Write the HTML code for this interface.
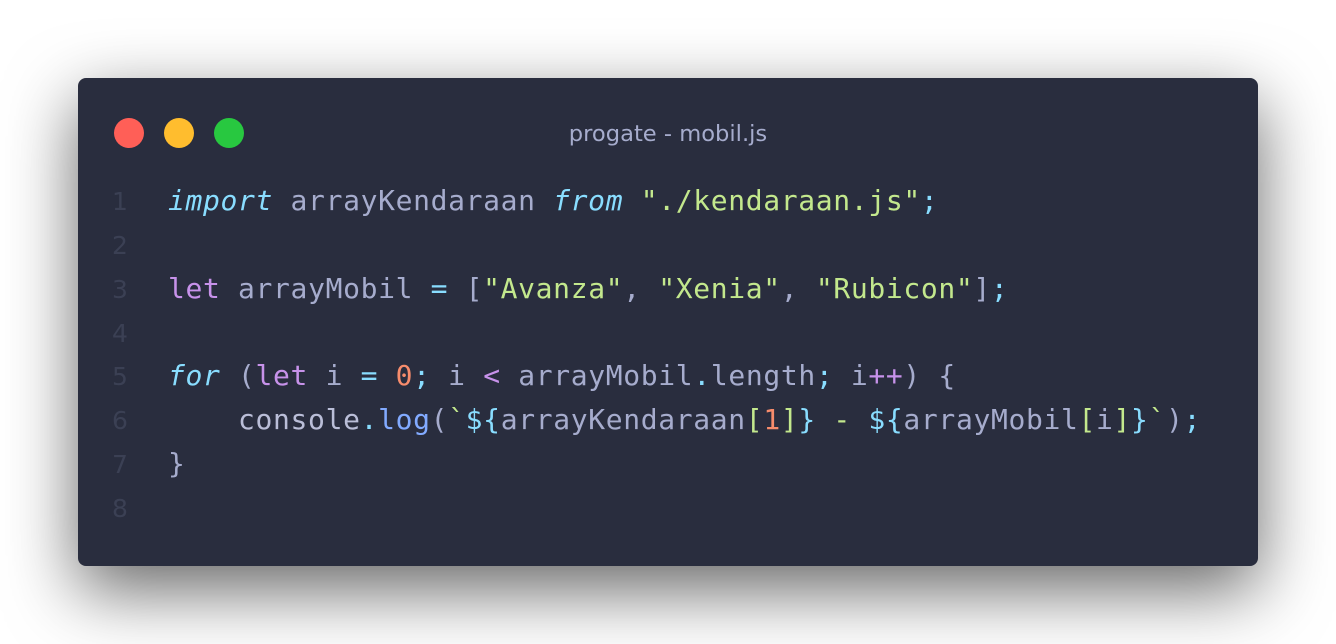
<!DOCTYPE html>
<html><head><style>
body{margin:0;width:1336px;height:644px;background:#fff;overflow:hidden;position:relative;font-family:"Liberation Sans",sans-serif}
.win{position:absolute;left:78px;top:78px;width:1180px;height:488px;background:#292d3e;border-radius:8px;box-shadow:0 24px 70px rgba(0,0,0,0.6)}
.dot{position:absolute;top:40px;width:30px;height:30px;border-radius:50%}
.title{position:absolute;top:41px;left:0;width:1180px;text-align:center;color:#a6accd;font-family:"DejaVu Sans",sans-serif;font-size:22.6px;line-height:30px}
.code{position:absolute;left:0;top:101px;font-family:"DejaVu Sans Mono",monospace;font-size:28px;letter-spacing:0.65px;line-height:43.86px;color:#a6accd;white-space:pre}
.line{height:43.86px}
.ln{display:inline-block;width:90px;text-align:left;padding-left:34px;box-sizing:border-box;color:#3b4054;font-family:"DejaVu Sans",sans-serif;font-size:25px;letter-spacing:0;line-height:1}
.k{color:#89ddff;font-style:italic}.p{color:#c792ea}.s{color:#c3e88d}.o{color:#89ddff}.n{color:#f78c6c}.f{color:#82aaff}.c{color:#babed8}
</style></head><body>
<div class="win">
<div class="dot" style="left:36px;background:#ff5f57"></div>
<div class="dot" style="left:86px;background:#ffbd2e"></div>
<div class="dot" style="left:136px;background:#28c840"></div>
<div class="title">progate - mobil.js</div>
<div class="code"><div class="line"><span class="ln">1</span><span class="k">import</span> arrayKendaraan <span class="k">from</span> <span class="s">"./kendaraan.js"</span><span class="o">;</span></div><div class="line"><span class="ln">2</span></div><div class="line"><span class="ln">3</span><span class="p">let</span> arrayMobil <span class="o">=</span> [<span class="s">"Avanza"</span>, <span class="s">"Xenia"</span>, <span class="s">"Rubicon"</span>]<span class="o">;</span></div><div class="line"><span class="ln">4</span></div><div class="line"><span class="ln">5</span><span class="k">for</span> (<span class="p">let</span> i <span class="o">=</span> <span class="n">0</span><span class="o">;</span> i <span class="p">&lt;</span> arrayMobil<span class="o">.</span>length<span class="o">;</span> i<span class="p">++</span>) {</div><div class="line"><span class="ln">6</span>    <span class="c">console</span><span class="o">.</span><span class="f">log</span>(<span class="s">`</span><span class="o">${</span>arrayKendaraan<span class="s">[</span><span class="n">1</span><span class="s">]</span><span class="o">}</span> <span class="s">-</span> <span class="o">${</span>arrayMobil<span class="s">[</span>i<span class="s">]</span><span class="o">}</span><span class="s">`</span>)<span class="o">;</span></div><div class="line"><span class="ln">7</span>}</div><div class="line"><span class="ln">8</span></div></div>
</div>
</body></html>
